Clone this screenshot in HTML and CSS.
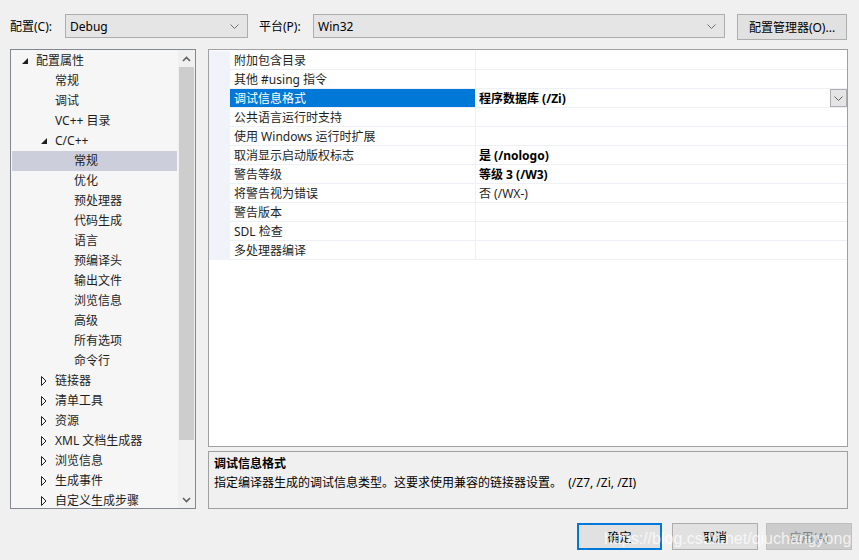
FILE: index.html
```html
<!DOCTYPE html>
<html lang="zh-CN">
<head>
<meta charset="utf-8">
<title>属性页</title>
<link rel="stylesheet" href="styles.css">
</head>
<body>
<div class="dialog">
  <div class="topbar">
    <span class="label label-config">配置(C):</span>
    <div class="combo combo-config"><span>Debug</span><svg class="chev" width="9" height="5" viewBox="0 0 9 5"><polyline points="0.5,0.5 4.5,4.5 8.5,0.5" fill="none" stroke="#707070" stroke-width="1"/></svg></div>
    <span class="label label-platform">平台(P):</span>
    <div class="combo combo-platform"><span>Win32</span><svg class="chev" width="9" height="5" viewBox="0 0 9 5"><polyline points="0.5,0.5 4.5,4.5 8.5,0.5" fill="none" stroke="#707070" stroke-width="1"/></svg></div>
    <button class="btn btn-manager">配置管理器(O)...</button>
  </div>

  <div class="main">
    <div class="tree">
      <ul class="tree-list">
        <li class="node l1"><span class="tw"><svg width="6" height="6" viewBox="0 0 6 6"><polygon points="6,0 6,6 0,6" fill="#1e1e1e"/></svg></span>配置属性</li>
        <li class="node l2">常规</li>
        <li class="node l2">调试</li>
        <li class="node l2">VC++ 目录</li>
        <li class="node l2 has-tw"><span class="tw"><svg width="6" height="6" viewBox="0 0 6 6"><polygon points="6,0 6,6 0,6" fill="#1e1e1e"/></svg></span>C/C++</li>
        <li class="node l3 selected">常规</li>
        <li class="node l3">优化</li>
        <li class="node l3">预处理器</li>
        <li class="node l3">代码生成</li>
        <li class="node l3">语言</li>
        <li class="node l3">预编译头</li>
        <li class="node l3">输出文件</li>
        <li class="node l3">浏览信息</li>
        <li class="node l3">高级</li>
        <li class="node l3">所有选项</li>
        <li class="node l3">命令行</li>
        <li class="node l2 has-tw"><span class="tw"><svg width="6" height="10" viewBox="0 0 6 10"><polygon points="0.5,0.5 5,5 0.5,9.5" fill="none" stroke="#1e1e1e" stroke-width="1"/></svg></span>链接器</li>
        <li class="node l2 has-tw"><span class="tw"><svg width="6" height="10" viewBox="0 0 6 10"><polygon points="0.5,0.5 5,5 0.5,9.5" fill="none" stroke="#1e1e1e" stroke-width="1"/></svg></span>清单工具</li>
        <li class="node l2 has-tw"><span class="tw"><svg width="6" height="10" viewBox="0 0 6 10"><polygon points="0.5,0.5 5,5 0.5,9.5" fill="none" stroke="#1e1e1e" stroke-width="1"/></svg></span>资源</li>
        <li class="node l2 has-tw"><span class="tw"><svg width="6" height="10" viewBox="0 0 6 10"><polygon points="0.5,0.5 5,5 0.5,9.5" fill="none" stroke="#1e1e1e" stroke-width="1"/></svg></span>XML 文档生成器</li>
        <li class="node l2 has-tw"><span class="tw"><svg width="6" height="10" viewBox="0 0 6 10"><polygon points="0.5,0.5 5,5 0.5,9.5" fill="none" stroke="#1e1e1e" stroke-width="1"/></svg></span>浏览信息</li>
        <li class="node l2 has-tw"><span class="tw"><svg width="6" height="10" viewBox="0 0 6 10"><polygon points="0.5,0.5 5,5 0.5,9.5" fill="none" stroke="#1e1e1e" stroke-width="1"/></svg></span>生成事件</li>
        <li class="node l2 has-tw"><span class="tw"><svg width="6" height="10" viewBox="0 0 6 10"><polygon points="0.5,0.5 5,5 0.5,9.5" fill="none" stroke="#1e1e1e" stroke-width="1"/></svg></span>自定义生成步骤</li>
      </ul>
      <div class="vscroll">
        <div class="sarrow"><svg width="9" height="6" viewBox="0 0 9 6"><polyline points="1,5 4.5,1.5 8,5" fill="none" stroke="#606060" stroke-width="1.6"/></svg></div>
        <div class="sthumb"></div>
        <div class="strack"></div>
        <div class="sarrow"><svg width="9" height="6" viewBox="0 0 9 6"><polyline points="1,1 4.5,4.5 8,1" fill="none" stroke="#606060" stroke-width="1.6"/></svg></div>
      </div>
    </div>

    <div class="right">
      <div class="grid">
        <div class="prow"><div class="gut"></div><div class="pname">附加包含目录</div><div class="pval"></div></div>
        <div class="prow"><div class="gut"></div><div class="pname">其他 #using 指令</div><div class="pval"></div></div>
        <div class="prow sel"><div class="gut"></div><div class="pname">调试信息格式</div><div class="pval"><b>程序数据库 (/Zi)</b><span class="ddbtn"><svg width="9" height="5" viewBox="0 0 9 5"><polyline points="0.5,0.5 4.5,4.5 8.5,0.5" fill="none" stroke="#606060" stroke-width="1"/></svg></span></div></div>
        <div class="prow"><div class="gut"></div><div class="pname">公共语言运行时支持</div><div class="pval"></div></div>
        <div class="prow"><div class="gut"></div><div class="pname">使用 Windows 运行时扩展</div><div class="pval"></div></div>
        <div class="prow"><div class="gut"></div><div class="pname">取消显示启动版权标志</div><div class="pval"><b>是 (/nologo)</b></div></div>
        <div class="prow"><div class="gut"></div><div class="pname">警告等级</div><div class="pval"><b>等级 3 (/W3)</b></div></div>
        <div class="prow"><div class="gut"></div><div class="pname">将警告视为错误</div><div class="pval">否 (/WX-)</div></div>
        <div class="prow"><div class="gut"></div><div class="pname">警告版本</div><div class="pval"></div></div>
        <div class="prow"><div class="gut"></div><div class="pname">SDL 检查</div><div class="pval"></div></div>
        <div class="prow"><div class="gut"></div><div class="pname">多处理器编译</div><div class="pval"></div></div>
      </div>
      <div class="desc">
        <div class="desc-title">调试信息格式</div>
        <div class="desc-text">指定编译器生成的调试信息类型。这要求使用兼容的链接器设置。&nbsp; (/Z7, /Zi, /ZI)</div>
      </div>
    </div>
  </div>

  <div class="buttons">
    <button class="btn btn-ok">确定</button>
    <button class="btn btn-cancel">取消</button>
    <button class="btn btn-apply" disabled>应用(A)</button>
  </div>

  <div class="watermark">https://blog.csdn.net/qiuchangyong</div>
</div>
</body>
</html>
```
FILE: styles.css
```css
* { box-sizing: border-box; }

html, body {
  margin: 0;
  padding: 0;
}

body {
  width: 859px;
  height: 560px;
  background: #f0f0f0;
  font-family: "Noto Sans", "Noto Sans CJK SC", sans-serif;
  font-size: 12px;
  color: #000;
  overflow: hidden;
}

.dialog {
  position: relative;
  width: 859px;
  height: 560px;
}

/* top bar */
.topbar {
  display: flex;
  align-items: flex-start;
  padding: 14px 0 0 10px;
  height: 40px;
}

.label {
  line-height: 25px;
  height: 24px;
}

.label-config { width: 55px; }
.label-platform { width: 54px; margin-left: 11px; }

.combo {
  display: flex;
  align-items: center;
  justify-content: space-between;
  height: 24px;
  padding: 0 8px 0 4px;
  background: #e5e5e5;
  border: 1px solid #adadad;
}

.combo span { line-height: 23px; }
.combo .chev { margin-top: 1px; }

.combo-config { width: 183px; }
.combo-platform { width: 412px; }

.btn {
  font-family: inherit;
  font-size: 12px;
  color: #000;
  background: #e1e1e1;
  border: 1px solid #adadad;
  padding: 0;
  margin: 0;
}

.btn-manager {
  margin-left: 12px;
  width: 110px;
  height: 26px;
}

/* main */
.main {
  display: flex;
  gap: 12px;
  padding-left: 10px;
  margin-top: 9px;
  height: 460px;
}

.tree {
  width: 186px;
  height: 460px;
  border: 1px solid #828790;
  background: #f6f6f6;
  display: flex;
}

.tree-list {
  list-style: none;
  margin: 0;
  padding: 1px 0 0 0;
  flex: 1;
  overflow: hidden;
}

.node {
  position: relative;
  height: 20px;
  line-height: 20px;
  margin: 0 1px;
  white-space: nowrap;
  color: #1e1e1e;
}

.node.l1 { padding-left: 24px; }
.node.l2 { padding-left: 43px; }
.node.l3 { padding-left: 62px; }

.node.selected { background: #cccedb; }

.tw {
  display: inline-flex;
  align-items: center;
  justify-content: center;
  position: absolute;
  top: 0;
  height: 20px;
  width: 8px;
}

.node.l1 .tw { left: 9px; }
.node.l2 .tw { left: 28px; }

.vscroll {
  width: 17px;
  display: flex;
  flex-direction: column;
  background: #f0f0f0;
}

.sarrow {
  height: 17px;
  display: flex;
  align-items: center;
  justify-content: center;
}

.sthumb {
  height: 373px;
  margin: 0 1px;
  background: #cdcdcd;
}

.strack { flex: 1; }

/* right side */
.right {
  width: 640px;
  display: flex;
  flex-direction: column;
  gap: 4px;
}

.grid {
  height: 398px;
  border: 1px solid #a0a0a0;
  background: #fff;
  padding-top: 1px;
}

.prow {
  display: grid;
  grid-template-columns: 21px 246px 1fr;
  height: 19px;
}

.gut {
  background: #f0f4fa;
}

.pname, .pval {
  height: 19px;
  line-height: 18px;
  padding-top: 1px;
  border-bottom: 1px solid #edf0f5;
  white-space: nowrap;
  color: #1e1e1e;
}

.pname {
  padding-left: 4px;
  border-right: 1px solid #edf0f5;
}

.pval {
  display: flex;
  align-items: center;
  padding-left: 3px;
}

.pval b { font-weight: 700; color: #000; }

.prow.sel .pname {
  background: #0078d7;
  color: #fff;
}

.ddbtn {
  margin-left: auto;
  margin-top: -1px;
  width: 17px;
  height: 18px;
  background: #e5e5e5;
  border: 1px solid #adadad;
  display: flex;
  align-items: center;
  justify-content: center;
}

.desc {
  height: 58px;
  border: 1px solid #a0a0a0;
  background: #f0f0f0;
  padding: 2px 5px;
}

.desc-title {
  font-weight: 700;
  line-height: 19px;
}

.desc-text {
  line-height: 19px;
}

/* bottom buttons */
.buttons {
  display: flex;
  justify-content: flex-end;
  padding-right: 7px;
  margin-top: 14px;
  gap: 0;
}

.buttons .btn {
  height: 27px;
  width: 86px;
}

.btn-ok {
  width: 85px !important;
  border: 2px solid #0078d7 !important;
}

.btn-cancel { margin-left: 10px; }

.btn-apply {
  margin-left: 8px;
  background: #cccccc !important;
  border-color: #bfbfbf !important;
  color: #838383 !important;
}

.watermark {
  position: absolute;
  left: 604px;
  top: 530px;
  font-family: "Liberation Sans", sans-serif;
  font-size: 16px;
  color: rgba(255, 255, 255, 0.75);
  white-space: nowrap;
  pointer-events: none;
}
```
